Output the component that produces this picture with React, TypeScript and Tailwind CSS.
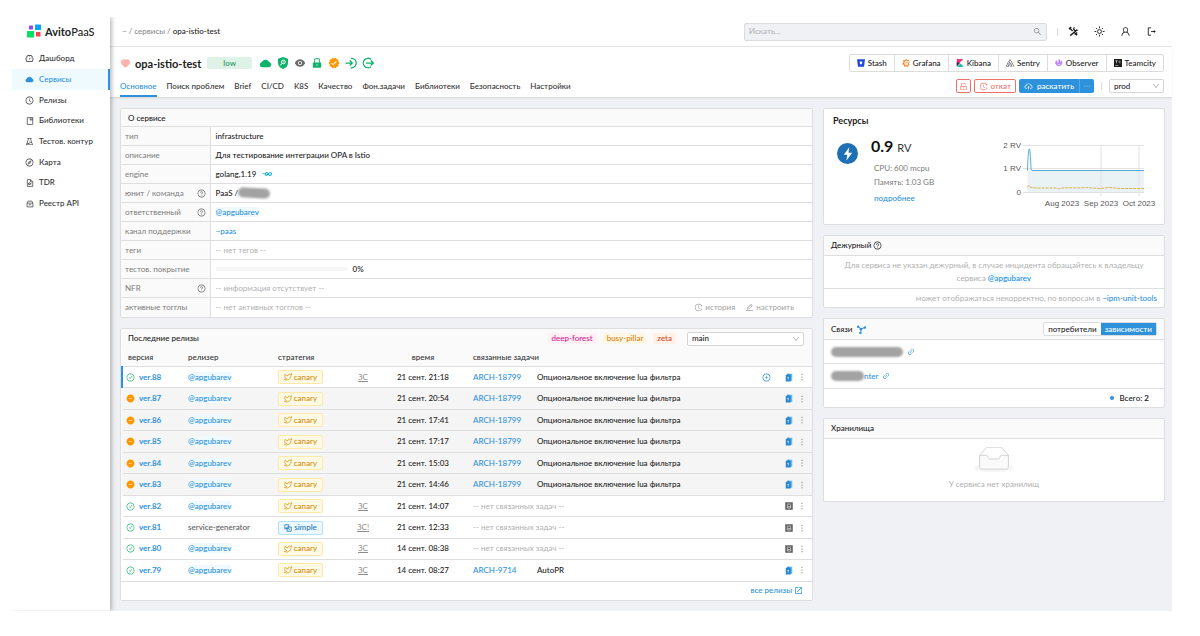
import type { ReactNode } from "react";
import {
  AiFillCloud,
  AiFillEye,
  AiFillHeart,
  AiFillLock,
  AiFillMinusCircle,
  AiOutlineCheckCircle,
  AiOutlineClockCircle,
  AiOutlineCloudUpload,
  AiOutlineCompass,
  AiOutlineDashboard,
  AiOutlineDown,
  AiOutlineEdit,
  AiOutlineEllipsis,
  AiOutlineExperiment,
  AiOutlineHistory,
  AiOutlineLink,
  AiOutlineMore,
  AiOutlinePlusCircle,
  AiOutlineQuestionCircle,
  AiOutlineSearch,
  AiOutlineUnlock,
  AiOutlineUser,
} from "react-icons/ai";
import { MdOpenInNew, MdVerified } from "react-icons/md";
import { SiGo, SiGrafana, SiSentry } from "react-icons/si";
import { FiTwitter } from "react-icons/fi";

/* Icons that the packages do not have */

function BookIcon() {
  return (
    <svg viewBox="0 0 16 16" className="size-2" fill="none" stroke="currentColor" strokeWidth="1.4">
      <path d="M2.5 1.2h11v13.6h-11z" />
      <path d="M8.5 1.5v5l1.8-1.4 1.8 1.4v-5" />
    </svg>
  );
}

function FileIcon() {
  return (
    <svg viewBox="0 0 16 16" className="size-2" fill="none" stroke="currentColor" strokeWidth="1.4">
      <path d="M2.7 1.2h6.8l4 4v9.6H2.7z" />
      <path d="M9 1.5v4.2h4.2M5 8h3.5v3H5zM8.5 9.5H11" />
    </svg>
  );
}

function ApiIcon() {
  return (
    <svg viewBox="0 0 16 16" className="size-2" fill="none" stroke="currentColor" strokeWidth="1.4">
      <path d="M2.2 6.2h11.6v7.6H2.2zM2.2 6.2l2-4h7.6l2 4M5.5 9.5h5" />
    </svg>
  );
}

function ToolsIcon() {
  return (
    <svg viewBox="0 0 24 24" className="size-[11px]" fill="none" stroke="currentColor" strokeWidth="3">
      <path d="M3 4l7 7M14 14l6 6M20 8L5 21" />
      <path d="M14 3c-3 3-1 7 2 7l5-1M2 7l5-5M15 19l5-5" />
    </svg>
  );
}

function SunIcon() {
  return (
    <svg viewBox="0 0 24 24" className="size-[11px]" fill="none" stroke="currentColor" strokeWidth="2">
      <circle cx="12" cy="12" r="4.2" />
      <path d="M12 1v4M12 19v4M1 12h4M19 12h4M4.2 4.2l2.8 2.8M17 17l2.8 2.8M4.2 19.8L7 17M17 7l2.8-2.8" />
    </svg>
  );
}

function LogoutIcon() {
  return (
    <svg viewBox="0 0 24 24" className="size-[11px]" fill="none" stroke="currentColor" strokeWidth="2">
      <path d="M11 4H5v16h6M11 12h8" />
      <path d="M17 8.5l4.500 3.500-4.500 3.500z" fill="currentColor" stroke="none" />
    </svg>
  );
}

function ShieldIcon() {
  return (
    <svg viewBox="0 0 24 24" className="size-3">
      <path d="M12 0l10 3.500v8.500c0 6-4 10-10 12C6 22 2 18 2 12V3.500z" fill="#0cb36b" />
      <circle cx="12.800" cy="9.800" r="3.800" fill="none" stroke="#fff" strokeWidth="2" />
      <path d="M10 12.500L6.500 17M11.500 9.800h2.600" stroke="#fff" strokeWidth="2" />
    </svg>
  );
}

function EnterIcon() {
  return (
    <svg viewBox="0 0 24 24" className="size-3" fill="none" stroke="#0cb36b" strokeWidth="2.500">
      <path d="M12 2.500h1a9.500 9.500 0 0 1 0 19h-2M1 12h13M9.500 7l5 5-5 5" />
    </svg>
  );
}

function LeaveIcon() {
  return (
    <svg viewBox="0 0 24 24" className="size-3" fill="none" stroke="#0cb36b" strokeWidth="2.500">
      <path d="M18 4.500a9.500 9.500 0 1 0 0 15M8 12h14M17.500 7l5 5-5 5" />
    </svg>
  );
}

function StashIcon() {
  return (
    <svg viewBox="0 0 16 16" className="size-2">
      <path d="M0 .5h16L14 15.500H2z" fill="#1d49d8" />
      <path d="M5.300 5h5.400l-.9 5.500H6.200z" fill="#fff" />
    </svg>
  );
}

function KibanaIcon() {
  return (
    <svg viewBox="0 0 16 16" className="size-2">
      <path d="M1.500 0h13L1.500 14z" fill="#f0357f" />
      <path d="M1.500 6.500c3 0 5 .8 6.300 1.700L1.500 15.500z" fill="#343741" />
      <path d="M8.500 8.800c3.300 1.600 5.400 4.200 6 7.200H2.200z" fill="#1fbdb2" />
    </svg>
  );
}

function ObserverIcon() {
  return (
    <svg viewBox="0 0 16 16" className="size-2">
      <path d="M1.500 4l3-1.500V7H7V.5L10.500 1v5l3-2.500A7 7 0 1 1 1.500 4z" fill="#c084f5" />
      <path d="M5 9.500c1 2.500 4.500 3 6.500.5" fill="none" stroke="#fff" strokeWidth="1.300" />
    </svg>
  );
}

function TeamcityIcon() {
  return (
    <svg viewBox="0 0 16 16" className="size-2">
      <path d="M0 0h16v16H0z" fill="#1c1c1c" />
      <path d="M2.500 3.500h5M5 3.500v5M13 4.500c-3-2-5 3.500 0 3.200M2.500 13h6" fill="none" stroke="#fff" strokeWidth="1.100" />
    </svg>
  );
}

function SimpleIcon() {
  return (
    <svg viewBox="0 0 16 16" className="size-2" fill="none" stroke="currentColor" strokeWidth="1.600">
      <path d="M1.500 1.500h8v8h-8zM6 6h8.500v8.500H6z" />
      <path d="M4 7l2.500 3M9.500 9.500l2 2" />
    </svg>
  );
}

function NetworkIcon() {
  return (
    <svg viewBox="0 0 16 16" className="size-[9px]" fill="#2d91db" stroke="#2d91db" strokeWidth="1.800">
      <path d="M2 3l5 4 7-2.500M7 7v6.500" fill="none" />
      <circle cx="2" cy="3" r="1.200" />
      <circle cx="14" cy="4.500" r="1.200" />
      <circle cx="7" cy="7.500" r="1.500" />
      <circle cx="6" cy="14" r="1.200" />
    </svg>
  );
}

function BatchIcon() {
  return (
    <svg viewBox="0 0 16 18" className="h-[9px] w-2">
      <path d="M5 1.500h9.500v14H5z" fill="#6db6ea" />
      <path d="M1.500 3.500h3V1.500h4v2h3V17h-10z" fill="#2686d0" />
      <path d="M6.500 7.500V13M4.800 9h1.700" stroke="#fff" strokeWidth="1.300" />
    </svg>
  );
}

function ArchiveIcon() {
  return (
    <svg viewBox="0 0 16 16" className="size-2">
      <path d="M.5.5h15v15H.5z" fill="#5c5c5c" />
      <path d="M3.500 4.200h9M4.500 7v5h7V7l-3.500 3z" fill="none" stroke="#fff" strokeWidth="1.200" />
    </svg>
  );
}

function Logo() {
  return (
    <svg viewBox="0 0 14 14" className="size-[14px]">
      <rect x="2" y="1.500" width="4" height="4" rx="0.500" fill="#9747f5" />
      <rect x="8" y="0.500" width="6" height="5.500" rx="0.500" fill="#0aa5ff" />
      <rect x="0" y="7" width="7" height="6.500" rx="0.500" fill="#05e061" />
      <rect x="9" y="8" width="4.500" height="4.500" rx="0.500" fill="#ff4053" />
    </svg>
  );
}

function EmptyBox() {
  return (
    <svg viewBox="0 0 64 41" className="h-[26px] w-10">
      <ellipse cx="32" cy="33" rx="32" ry="7" fill="#f5f5f5" />
      <g stroke="#d0d0d0" strokeWidth="1.500" fillRule="nonzero">
        <path d="M55 12.760L44.854 1.258C44.367.474 43.656 0 42.907 0H21.093c-.749 0-1.460.474-1.947 1.257L9 12.761V22h46v-9.240z" fill="none" />
        <path
          d="M41.613 15.931c0-1.605.994-2.930 2.227-2.931H55v18.137C55 33.260 53.680 35 52.050 35h-40.100C10.320 35 9 33.259 9 31.137V13h11.160c1.233 0 2.227 1.323 2.227 2.928v.022c0 1.605 1.005 2.901 2.237 2.901h14.752c1.232 0 2.237-1.308 2.237-2.913v-.007z"
          fill="#fafafa"
        />
      </g>
    </svg>
  );
}

/* Data and small shared parts */

const menu: { label: string; icon: ReactNode; active?: boolean }[] = [
  { label: "Дашборд", icon: <AiOutlineDashboard className="size-[9px]" /> },
  { label: "Сервисы", icon: <AiFillCloud className="size-[9px]" />, active: true },
  { label: "Релизы", icon: <AiOutlineClockCircle className="size-[9px]" /> },
  { label: "Библиотеки", icon: <BookIcon /> },
  { label: "Тестов. контур", icon: <AiOutlineExperiment className="size-[9px]" /> },
  { label: "Карта", icon: <AiOutlineCompass className="size-[9px]" /> },
  { label: "TDR", icon: <FileIcon /> },
  { label: "Реестр API", icon: <ApiIcon /> },
];

const tabs = [
  "Основное",
  "Поиск проблем",
  "Brief",
  "CI/CD",
  "K8S",
  "Качество",
  "Фон.задачи",
  "Библиотеки",
  "Безопасность",
  "Настройки",
];

const tools: { label: string; icon: ReactNode }[] = [
  { label: "Stash", icon: <StashIcon /> },
  { label: "Grafana", icon: <SiGrafana className="size-2 text-[#f58220]" /> },
  { label: "Kibana", icon: <KibanaIcon /> },
  { label: "Sentry", icon: <SiSentry className="size-2 text-[#555]" /> },
  { label: "Observer", icon: <ObserverIcon /> },
  { label: "Teamcity", icon: <TeamcityIcon /> },
];

function UserLink({ name }: { name: string }) {
  return (
    <a href="#" className="rounded-xs bg-[#effaff] text-[#2d91db]">
      {name}
    </a>
  );
}

function Redacted({ className }: { className: string }) {
  return <span className={`inline-block rounded-full bg-[#a3a3a3] blur-[1px] ${className}`} />;
}

function Muted({ children }: { children: ReactNode }) {
  return <span className="font-normal text-[#b0b0b0]">{children}</span>;
}

const info: { label: string; help?: boolean; value: ReactNode }[] = [
  { label: "тип", value: "infrastructure" },
  { label: "описание", value: "Для тестирование интеграции OPA в Istio" },
  {
    label: "engine",
    value: (
      <span className="flex items-center gap-1.5">
        golang,1.19 <SiGo className="size-[10px] text-[#00acd7]" />
      </span>
    ),
  },
  {
    label: "юнит / команда",
    help: true,
    value: (
      <span className="flex items-center">
        PaaS /<Redacted className="h-[10px] w-8 rotate-3" />
      </span>
    ),
  },
  { label: "ответственный", help: true, value: <UserLink name="@apgubarev" /> },
  {
    label: "канал поддержки",
    value: (
      <a href="#" className="text-[#2d91db]">
        ~paas
      </a>
    ),
  },
  { label: "теги", value: <Muted>-- нет тегов --</Muted> },
  {
    label: "тестов. покрытие",
    value: (
      <span className="flex items-center gap-[5px]">
        <span className="h-1 w-[132px] rounded-full bg-[#f5f5f5]" />
        0%
      </span>
    ),
  },
  { label: "NFR", help: true, value: <Muted>-- информация отсутствует --</Muted> },
  {
    label: "активные тогглы",
    value: (
      <span className="flex items-center justify-between pr-[13px]">
        <Muted>-- нет активных тогглов --</Muted>
        <span className="flex gap-2.5 font-normal text-[#a0a0a0]">
          <button type="button" className="flex items-center gap-0.5">
            <AiOutlineHistory className="size-[9px]" /> история
          </button>
          <button type="button" className="flex items-center gap-0.5">
            <AiOutlineEdit className="size-[9px]" /> настроить
          </button>
        </span>
      </span>
    ),
  },
];

type Release = {
  version: string;
  user?: string;
  simple?: boolean;
  stopped?: boolean;
  mark?: string;
  time: string;
  task?: string;
  title?: string;
  current?: boolean;
};

const lua = "Опциональное включение lua фильтра";

const releases: Release[] = [
  { version: "ver.88", mark: "ЗС", time: "21 сент. 21:18", task: "ARCH-18799", title: lua, current: true },
  { version: "ver.87", stopped: true, time: "21 сент. 20:54", task: "ARCH-18799", title: lua },
  { version: "ver.86", stopped: true, time: "21 сент. 17:41", task: "ARCH-18799", title: lua },
  { version: "ver.85", stopped: true, time: "21 сент. 17:17", task: "ARCH-18799", title: lua },
  { version: "ver.84", stopped: true, time: "21 сент. 15:03", task: "ARCH-18799", title: lua },
  { version: "ver.83", stopped: true, time: "21 сент. 14:46", task: "ARCH-18799", title: lua },
  { version: "ver.82", mark: "ЗС", time: "21 сент. 14:07" },
  { version: "ver.81", user: "service-generator", simple: true, mark: "ЗС!", time: "21 сент. 12:33" },
  { version: "ver.80", mark: "ЗС", time: "14 сент. 08:38" },
  { version: "ver.79", mark: "ЗС", time: "14 сент. 08:27", task: "ARCH-9714", title: "AutoPR" },
];

function Card({ children }: { children: ReactNode }) {
  return <section className="overflow-hidden rounded-xs border border-[#dedede] bg-white">{children}</section>;
}

function Sidebar() {
  return (
    <aside className="z-20 w-[98px] shrink-0 bg-white shadow-[1px_0_5px_rgba(0,0,0,0.35)] [clip-path:inset(0_-10px_0_0)]">
      <a href="#" className="flex h-7 items-center gap-1 pl-[15px] text-[11px] text-[#222]">
        <Logo />
        <span>
          <b className="font-bold">Avito</b>PaaS
        </span>
      </a>
      <nav className="mt-[3px]">
        {menu.map((item, i) => (
          <a
            key={item.label}
            href="#"
            className={`flex items-center gap-[5px] border-r-2 pl-[13px] ${i % 3 === 2 ? "h-5" : "h-[21px]"} ${
              item.active ? "border-[#2d91db] bg-[#effaff] text-[#2d91db]" : "border-transparent text-[#333]"
            }`}
          >
            <span className="flex w-[9px] justify-center">{item.icon}</span>
            {item.label}
          </a>
        ))}
      </nav>
    </aside>
  );
}

function TopBar() {
  return (
    <header className="flex h-[30px] items-center border-b border-[#e4e4e4] bg-white pr-[15px] pl-3">
      <nav className="text-[#8c8c8c]">
        <a href="#">~</a> / <a href="#">сервисы</a> / <span className="text-[#262626]">opa-istio-test</span>
      </nav>
      <label className="ml-auto flex h-[18px] w-[303px] items-center rounded-xs border border-[#dcdcdc] bg-[#f0f1f5] px-1">
        <input
          type="text"
          placeholder="Искать..."
          aria-label="Поиск"
          className="min-w-0 flex-1 bg-transparent outline-none placeholder:text-[#b5b5b5]"
        />
        <AiOutlineSearch className="size-[9px] text-[#888]" />
      </label>
      <span className="mr-2.5 ml-[10px] h-2 w-px bg-[#dcdcdc]" />
      <div className="flex gap-[15px] text-[#222]">
        <button type="button" aria-label="Инструменты">
          <ToolsIcon />
        </button>
        <button type="button" aria-label="Тема">
          <SunIcon />
        </button>
        <button type="button" aria-label="Профиль">
          <AiOutlineUser className="size-[11px]" />
        </button>
        <button type="button" aria-label="Выйти">
          <LogoutIcon />
        </button>
      </div>
    </header>
  );
}

function ServiceHeader() {
  return (
    <div className="relative z-10 flex h-[51px] justify-between border-b border-[#dcdcdc] bg-white pr-2 pl-2.5 shadow-xs">
      <div className="flex flex-col justify-between">
        <div className="flex h-8 items-center">
          <AiFillHeart className="mr-1 size-[11px] text-[#ffb3ae]" />
          <h1 className="text-[11px] font-bold text-[#222]">opa-istio-test</h1>
          <span className="ml-1.5 flex h-3 w-[45px] items-center justify-center rounded-xs bg-[#dff2e8] text-[#1a9457]">
            low
          </span>
          <div className="ml-[7px] flex items-center gap-[5px]">
            <AiFillCloud className="size-[13px] text-[#0cb36b]" />
            <ShieldIcon />
            <AiFillEye className="size-3 text-[#6b6b6b]" />
            <AiFillLock className="size-3 text-[#0cb36b]" />
            <MdVerified className="size-3 text-[#ff9800]" />
            <EnterIcon />
            <LeaveIcon />
          </div>
        </div>
        <nav className="flex gap-[10px]">
          {tabs.map((tab, i) => (
            <a
              key={tab}
              href="#"
              className={`border-b-2 pb-[3px] ${i === 0 ? "border-[#2d91db] text-[#2d91db]" : "border-transparent text-[#333]"}`}
            >
              {tab}
            </a>
          ))}
        </nav>
      </div>
      <div className="flex flex-col items-end gap-[7px] pt-[7px]">
        <div className="flex h-[18px] divide-x divide-[#dcdcdc] rounded-xs border border-[#dcdcdc] text-[#222]">
          {tools.map((tool) => (
            <a key={tool.label} href="#" className="flex items-center gap-[3px] px-[7px]">
              {tool.icon}
              {tool.label}
            </a>
          ))}
        </div>
        <div className="flex h-[14px] items-center">
          <button
            type="button"
            aria-label="Заблокировать"
            className="flex h-full w-[15px] items-center justify-center rounded-xs border border-[#f2706c] text-[#f2706c]"
          >
            <AiOutlineUnlock className="size-[9px]" />
          </button>
          <button
            type="button"
            className="ml-[3px] flex h-full items-center gap-0.5 rounded-xs border border-[#f2706c] px-1 text-[#f2706c]"
          >
            <AiOutlineHistory className="size-[9px]" /> откат
          </button>
          <div className="ml-[3px] flex h-full divide-x divide-[#5ba9e3] rounded-xs bg-[#2d91db] text-white">
            <button type="button" className="flex items-center gap-1 px-[5px]">
              <AiOutlineCloudUpload className="size-[9px]" /> раскатить
            </button>
            <button type="button" aria-label="Ещё" className="px-[3px]">
              <AiOutlineEllipsis className="size-2" />
            </button>
          </div>
          <span className="mx-[7px] h-2 w-px bg-[#dcdcdc]" />
          <label className="relative flex h-full items-center">
            <select
              aria-label="Окружение"
              className="h-full w-[55px] appearance-none rounded-xs border border-[#d5d5d5] bg-white pl-1 text-[#222]"
            >
              <option>prod</option>
            </select>
            <AiOutlineDown className="pointer-events-none absolute right-1 size-2 text-[#aaa]" />
          </label>
        </div>
      </div>
    </div>
  );
}

function ServiceInfo() {
  return (
    <Card>
      <h2 className="h-[17px] bg-[#fafafa] pl-[7px] leading-[18px] text-[#222]">О сервисе</h2>
      <table className="w-full table-fixed border-collapse">
        <colgroup>
          <col className="w-[89px]" />
          <col />
        </colgroup>
        <tbody>
          {info.map((row) => (
            <tr key={row.label} className="h-[19px] border-t border-[#dedede]">
              <th scope="row" className="border-r border-[#dedede] bg-[#fafafa] px-1 text-left font-normal text-[#7a7a7a]">
                <span className="flex items-center justify-between">
                  {row.label}
                  {row.help && <AiOutlineQuestionCircle className="size-[9px] text-[#666]" />}
                </span>
              </th>
              <td className="px-[5px] text-[#222]">{row.value}</td>
            </tr>
          ))}
        </tbody>
      </table>
    </Card>
  );
}

function ReleaseRow({ row }: { row: Release }) {
  return (
    <tr className={`border-t border-[#dedede] ${row.stopped ? "bg-[#f5f5f5]" : "bg-white"}`}>
      <td className={`border-l-2 ${row.current ? "border-l-[#2d91db]" : "border-l-transparent"}`}>
        <span className="flex items-center gap-1 pl-[3px]">
          {row.stopped ? (
            <AiFillMinusCircle className="size-[9px] text-[#ff9800]" />
          ) : (
            <AiOutlineCheckCircle className="size-[9px] text-[#2bb673]" />
          )}
          <a href="#" className="font-bold text-[#2d91db]">
            {row.version}
          </a>
        </span>
      </td>
      <td>
        {row.user ? (
          <span className="rounded-xs bg-[#f7f7f7] text-[#666]">{row.user}</span>
        ) : (
          <UserLink name="@apgubarev" />
        )}
      </td>
      <td>
        {row.simple ? (
          <span className="flex h-[14px] w-[45px] items-center justify-center gap-0.5 rounded-xs border border-[#b5e0fa] bg-[#ebf8ff] text-[#2477b8]">
            <SimpleIcon /> simple
          </span>
        ) : (
          <span className="flex h-[14px] w-[45px] items-center justify-center gap-0.5 rounded-xs border border-[#ffe9a8] bg-[#fffae3] text-[#d48a0b]">
            <FiTwitter className="size-2" /> canary
          </span>
        )}
      </td>
      <td className="text-center font-normal text-[#8c8c8c] underline">{row.mark}</td>
      <td className="text-center text-[#222]">{row.time}</td>
      {row.task ? (
        <>
          <td className="pl-[15px]">
            <a href="#" className="text-[#2d91db]">
              {row.task}
            </a>
          </td>
          <td className="text-[#222]">{row.title}</td>
        </>
      ) : (
        <td colSpan={2} className="pl-[15px]">
          <Muted>-- нет связанных задач --</Muted>
        </td>
      )}
      <td>
        <span className="flex items-center justify-end pr-[5px]">
          {row.current && (
            <button type="button" aria-label="Продвинуть" className="mr-[14px]">
              <AiOutlinePlusCircle className="size-[9px] text-[#2d91db]" />
            </button>
          )}
          {row.task ? <BatchIcon /> : <ArchiveIcon />}
          <button type="button" aria-label="Действия" className="ml-1">
            <AiOutlineMore className="size-[10px] text-[#555]" />
          </button>
        </span>
      </td>
    </tr>
  );
}

function Releases() {
  return (
    <Card>
      <div className="flex h-5 items-center bg-[#fafafa] pr-2 pl-[7px]">
        <h2 className="mr-auto text-[#222]">Последние релизы</h2>
        <div className="mr-[11px] flex gap-1.5">
          <span className="rounded-xs bg-[#fff0f6] px-1 text-[#d6218f]">deep-forest</span>
          <span className="rounded-xs bg-[#fff7e6] px-1 text-[#d9820b]">busy-pillar</span>
          <span className="rounded-xs bg-[#fff1e8] px-1 text-[#d9481a]">zeta</span>
        </div>
        <label className="relative flex items-center">
          <select
            aria-label="Ветка"
            className="h-[14px] w-[117px] appearance-none rounded-xs border border-[#d5d5d5] bg-white pl-1 text-[#222]"
          >
            <option>main</option>
          </select>
          <AiOutlineDown className="pointer-events-none absolute right-1 size-2 text-[#aaa]" />
        </label>
      </div>
      <table className="h-[232px] w-full table-fixed border-collapse text-left">
        <colgroup>
          <col className="w-[66px]" />
          <col className="w-[90px]" />
          <col className="w-[60px]" />
          <col className="w-[50px]" />
          <col className="w-[70px]" />
          <col className="w-[79px]" />
          <col />
          <col className="w-[60px]" />
        </colgroup>
        <thead>
          <tr className="h-[18px] bg-[#fafafa] text-[#333]">
            <th className="pl-1.5 font-medium">версия</th>
            <th className="font-medium">релизер</th>
            <th className="font-medium">стратегия</th>
            <th aria-label="проверки" />
            <th className="text-center font-medium">время</th>
            <th colSpan={2} className="pl-[15px] font-medium">
              связанные задачи
            </th>
            <th aria-label="действия" />
          </tr>
        </thead>
        <tbody>
          {releases.map((row) => (
            <ReleaseRow key={row.version} row={row} />
          ))}
        </tbody>
      </table>
      <div className="flex h-[19px] items-center justify-end border-t border-[#dedede] pr-[9px]">
        <a href="#" className="flex items-center gap-0.5 text-[#2d91db]">
          все релизы <MdOpenInNew className="size-[9px]" />
        </a>
      </div>
    </Card>
  );
}

function ResourceChart() {
  return (
    <svg viewBox="0 0 160 76" className="h-[76px] w-40" fontFamily="Liberation Sans, sans-serif" fontSize="8" fill="#555">
      <path d="M26.500 32.500H143V54H26.500z" fill="#e9f2f5" />
      <path d="M22 7.500H143M22 30.500H143M22 54.500H143M100 7v51M138 7v51" stroke="#e2e2e2" fill="none" />
      <path
        d="M26.500 32.500C27.500 4 29 4 30 30.500Q30.200 32.500 31 32.500H143"
        fill="none"
        stroke="#58a9dc"
      />
      <path
        d="M26.500 49.500q1.500-4 3 0l5 .5h20l3 .7 6-.9 12 .2 10-.4 14 .9 8-1 12 1h24"
        fill="none"
        stroke="#e5b04f"
        strokeDasharray="3 1"
      />
      <g textAnchor="end">
        <text x="20" y="10">2 RV</text>
        <text x="20" y="33">1 RV</text>
        <text x="20" y="57">0</text>
      </g>
      <g textAnchor="middle">
        <text x="61" y="68">Aug 2023</text>
        <text x="100" y="68">Sep 2023</text>
        <text x="138" y="68">Oct 2023</text>
      </g>
    </svg>
  );
}

function Resources() {
  return (
    <Card>
      <div className="pt-1.5 pr-[3px] pb-2.5 pl-[9px]">
        <h2 className="text-[9px] leading-3 font-bold text-[#222]">Ресурсы</h2>
        <div className="flex justify-between">
          <div className="flex pl-1">
            <span className="mt-4 flex size-[21px] items-center justify-center rounded-full bg-[#1f6fb5]">
              <svg viewBox="0 0 12 16" className="h-[14px] w-[10px]" fill="#fff">
                <path d="M7.500 0L1 8.800h4.200L4 16l7-9.500H6.600z" />
              </svg>
            </span>
            <div className="ml-[13px] pt-[9px]">
              <p className="text-base leading-5 font-bold text-[#111]">
                0.9 <span className="text-[11px] font-normal text-[#333]">RV</span>
              </p>
              <div className="pt-[3px] pl-[3px] font-normal text-[#7a7a7a]">
                <p className="leading-[14px]">CPU: 600 mcpu</p>
                <p className="leading-[14px]">Память: 1.03 GB</p>
                <a href="#" className="mt-1 block font-medium text-[#2d91db]">
                  подробнее
                </a>
              </div>
            </div>
          </div>
          <div className="pt-[11px]">
            <ResourceChart />
          </div>
        </div>
      </div>
    </Card>
  );
}

function OnDuty() {
  return (
    <Card>
      <h2 className="flex h-[19px] items-center gap-0.5 bg-[#fafafa] pl-[7px] text-[#222]">
        Дежурный <AiOutlineQuestionCircle className="size-[9px]" />
      </h2>
      <p className="border-t border-[#dedede] px-4 py-[3px] text-center leading-[13px] font-normal text-[#b0b0b0]">
        Для сервиса не указан дежурный, в случае инцидента обращайтесь к владельцу сервиса{" "}
        <span className="font-medium">
          <UserLink name="@apgubarev" />
        </span>
      </p>
      <p className="border-t border-[#dedede] pr-[7px] text-right leading-[18px] font-normal text-[#b0b0b0]">
        может отображаться некорректно, по вопросам в{" "}
        <a href="#" className="font-medium text-[#2d91db]">
          ~ipm-unit-tools
        </a>
      </p>
    </Card>
  );
}

function Relations() {
  return (
    <Card>
      <div className="flex h-5 items-center bg-[#fafafa] px-[7px]">
        <h2 className="mr-[5px] text-[#222]">Связи</h2>
        <NetworkIcon />
        <div className="ml-auto flex h-[14px] rounded-xs border border-[#dcdcdc] bg-white text-[#222]">
          <button type="button" className="px-1">
            потребители
          </button>
          <button type="button" className="bg-[#2d91db] px-1 text-white">
            зависимости
          </button>
        </div>
      </div>
      <ul className="divide-y divide-[#dedede] border-y border-[#dedede]">
        <li className="flex h-6 items-center gap-1 pl-[7px]">
          <Redacted className="h-[10px] w-[72px]" />
          <a href="#" aria-label="Ссылка на сервис">
            <AiOutlineLink className="size-2 text-[#2d91db]" />
          </a>
        </li>
        <li className="flex h-6 items-center pl-[7px]">
          <Redacted className="h-[10px] w-[33px]" />
          <a href="#" className="flex items-center gap-1 text-[#2d91db]">
            nter <AiOutlineLink className="size-2" />
          </a>
        </li>
      </ul>
      <div className="flex h-[18px] items-center justify-end gap-[5px] pr-[15px] text-[#222]">
        <span className="size-1 rounded-full bg-[#2d91db]" />
        <span>
          Всего: <b>2</b>
        </span>
      </div>
    </Card>
  );
}

function Storages() {
  return (
    <Card>
      <h2 className="border-b border-[#dedede] bg-[#fafafa] pl-[7px] leading-[19px] text-[#222]">Хранилища</h2>
      <div className="flex flex-col items-center gap-1.5 pt-2 pb-[11px] font-normal text-[#b0b0b0]">
        <EmptyBox />
        <p>У сервиса нет хранилищ</p>
      </div>
    </Card>
  );
}

export default function App() {
  return (
    <div className="min-h-screen bg-white pt-[17px] pr-7 pb-[26px] pl-3 font-[Lato,'Noto_Sans',sans-serif] text-[8px] leading-[11px] font-medium">
      <div className="flex">
        <Sidebar />
        <div className="min-w-0 flex-1 bg-[#f0f1f5]">
          <TopBar />
          <ServiceHeader />
          <main className="flex items-start gap-2.5 py-2.5 pr-[7px] pl-2.5">
            <div className="flex min-w-0 flex-[693] flex-col gap-2.5">
              <ServiceInfo />
              <Releases />
            </div>
            <div className="flex min-w-0 flex-[342] flex-col gap-2.5">
              <Resources />
              <OnDuty />
              <Relations />
              <Storages />
            </div>
          </main>
        </div>
      </div>
    </div>
  );
}
